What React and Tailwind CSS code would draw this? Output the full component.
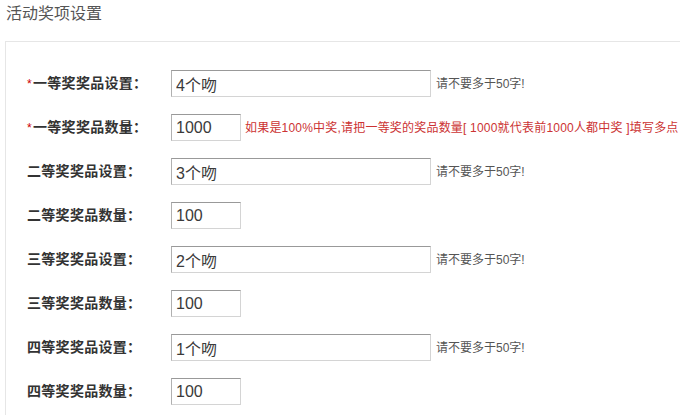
import React from 'react'

const ROWS = [
  { label: '一等奖奖品设置：', value: '4个吻', wide: true, required: true },
  { label: '一等奖奖品数量：', value: '1000', wide: false, required: true, note: true },
  { label: '二等奖奖品设置：', value: '3个吻', wide: true },
  { label: '二等奖奖品数量：', value: '100', wide: false },
  { label: '三等奖奖品设置：', value: '2个吻', wide: true },
  { label: '三等奖奖品数量：', value: '100', wide: false },
  { label: '四等奖奖品设置：', value: '1个吻', wide: true },
  { label: '四等奖奖品数量：', value: '100', wide: false },
]

const font = { fontFamily: '"Liberation Sans", "Noto Sans CJK SC", sans-serif' }

function Row({ row }) {
  return (
    <div className="flex items-center h-[27px] mb-[17px]">
      <label className="w-[144px] shrink-0 text-[14px] font-bold text-[#333] whitespace-nowrap tracking-[0.3px]">
        {row.required && <span className="text-[#c00] font-normal text-[12px] mr-[1px]">*</span>}
        {row.label}
      </label>
      <input
        readOnly
        value={row.value}
        className={`${row.wide ? 'w-[260px]' : 'w-[70px]'} h-[27px] shrink-0 border border-[#d4d4d4] border-t-[#999] border-l-[#b0b0b0] px-[4px] text-[16px] text-[#3a3a3a] outline-none bg-white`}
        style={font}
      />
      {row.wide && <span className="ml-[5px] text-[12px] text-[#555] whitespace-nowrap">请不要多于50字!</span>}
      {row.note && (
        <span className="ml-[4px] text-[12px] text-[#c33] whitespace-nowrap tracking-[0.2px]">
          如果是100%中奖,请把一等奖的奖品数量[ 1000就代表前1000人都中奖 ]填写多点
        </span>
      )}
    </div>
  )
}

export default function App() {
  return (
    <div className="w-[680px] h-[415px] overflow-hidden bg-white" style={font}>
      <div className="pl-[6px] pt-[3px] h-[41px] text-[16px] leading-[22px] text-[#555]">活动奖项设置</div>
      <div className="ml-[5px] border-t border-l border-[#e6e6e6] h-[374px] pl-[21px] pt-[28px]">
        {ROWS.map((r, i) => (
          <Row key={i} row={r} />
        ))}
      </div>
    </div>
  )
}
